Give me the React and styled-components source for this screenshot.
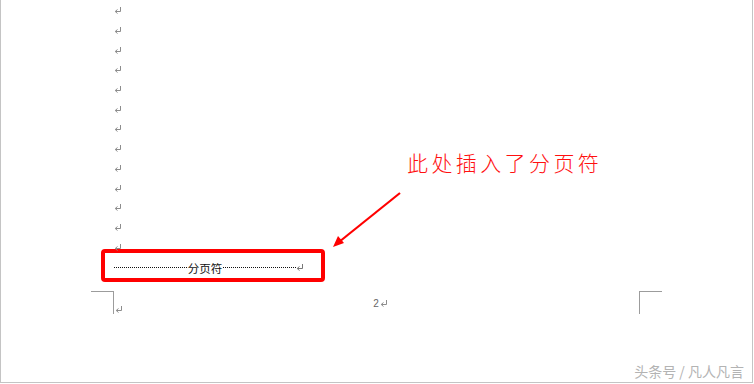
import React from 'react'
import styled, { createGlobalStyle } from 'styled-components'

const GlobalStyle = createGlobalStyle`
  html, body {
    margin: 0;
    padding: 0;
    background: #ffffff;
  }
  body {
    font-family: "Noto Sans CJK SC", "Liberation Sans", sans-serif;
  }
`

const Page = styled.div`
  position: relative;
  width: 753px;
  height: 383px;
  box-sizing: border-box;
  background: #fff;
  border-left: 1px solid #c4c4c4;
  border-right: 1px solid #c4c4c4;
  border-bottom: 1px solid #c4c4c4;
  overflow: hidden;
`

const Marks = styled.div`
  display: flex;
  flex-direction: column;
  padding: 1px 0 0 113px;
`

const MarkLine = styled.div`
  height: 19.7px;
  display: flex;
  align-items: center;
`

const BreakBox = styled.div`
  margin: -8px 0 0 100px;
  width: 224px;
  height: 33px;
  box-sizing: border-box;
  border: 4px solid #ff0000;
  border-radius: 4px;
  padding: 7px 17px 0 9px;
`

const BreakRow = styled.div`
  display: flex;
  align-items: center;
  height: 16px;
`

const Dots = styled.span`
  flex: 1;
  height: 0;
  border-top: 1px dotted #111;
`

const BreakLabel = styled.span`
  font-size: 11.5px;
  line-height: 16px;
  color: #111;
  padding: 0 1px;
`

const Footer = styled.div`
  display: grid;
  grid-template-columns: 90px 23px 1fr 23px 90px;
  margin-top: 9px;
`

const Corner = styled.div`
  height: 22px;
  border-top: 1px solid #9c9c9c;
  ${p => (p.$side === 'left' ? 'border-right' : 'border-left')}: 1px solid #9c9c9c;
`

const FooterMiddle = styled.div`
  display: grid;
  grid-template-columns: 1fr auto 1fr;
`

const BottomMark = styled.div`
  align-self: end;
  margin: 0 0 -4px 1px;
`

const PageNum = styled.div`
  display: flex;
  align-items: center;
  gap: 1px;
  font-family: "Liberation Sans", sans-serif;
  font-size: 10px;
  line-height: 12px;
  color: #666;
  padding: 3px 0 0 8px;
`

const Note = styled.div`
  position: absolute;
  left: 406px;
  top: 147px;
  font-family: "Noto Sans CJK SC", sans-serif;
  font-size: 21px;
  font-weight: 300;
  letter-spacing: 3.4px;
  color: #ff1010;
  white-space: nowrap;
`

const ArrowSvg = styled.svg`
  position: absolute;
  left: 326px;
  top: 186px;
`

const Watermark = styled.div`
  position: absolute;
  right: 8px;
  bottom: 2px;
  font-size: 14px;
  line-height: 17px;
  color: #b3b3b3;
  white-space: nowrap;
  font-family: "Noto Sans CJK SC", sans-serif;
`

const Pilcrow = ({ color = '#8c8c8c' }) => (
  <svg width="8" height="7" viewBox="0 0 8 7">
    <path d="M6.5 0 V4.5 H1.5" fill="none" stroke={color} strokeWidth="1" />
    <path d="M3.5 2.5 L1.2 4.5 L3.5 6.5" fill="none" stroke={color} strokeWidth="1" />
  </svg>
)

export default function App() {
  const marks = Array.from({ length: 13 })
  return (
    <>
      <GlobalStyle />
      <Page>
        <Marks>
          {marks.map((_, i) => (
            <MarkLine key={i}>
              <Pilcrow />
            </MarkLine>
          ))}
        </Marks>

        <BreakBox>
          <BreakRow>
            <Dots />
            <BreakLabel>分页符</BreakLabel>
            <Dots />
            <Pilcrow color="#777" />
          </BreakRow>
        </BreakBox>

        <Footer>
          <div />
          <Corner $side="left" />
          <FooterMiddle>
            <BottomMark>
              <Pilcrow />
            </BottomMark>
            <PageNum>
              2<Pilcrow />
            </PageNum>
            <div />
          </FooterMiddle>
          <Corner $side="right" />
          <div />
        </Footer>

        <Note>此处插入了分页符</Note>

        <ArrowSvg width="80" height="66" viewBox="0 0 80 66">
          <line x1="73" y1="7" x2="12" y2="56" stroke="#ff0000" strokeWidth="2.2" />
          <polygon points="6,61 11,50 17,57" fill="#ff0000" />
        </ArrowSvg>

        <Watermark>头条号 / 凡人凡言</Watermark>
      </Page>
    </>
  )
}
